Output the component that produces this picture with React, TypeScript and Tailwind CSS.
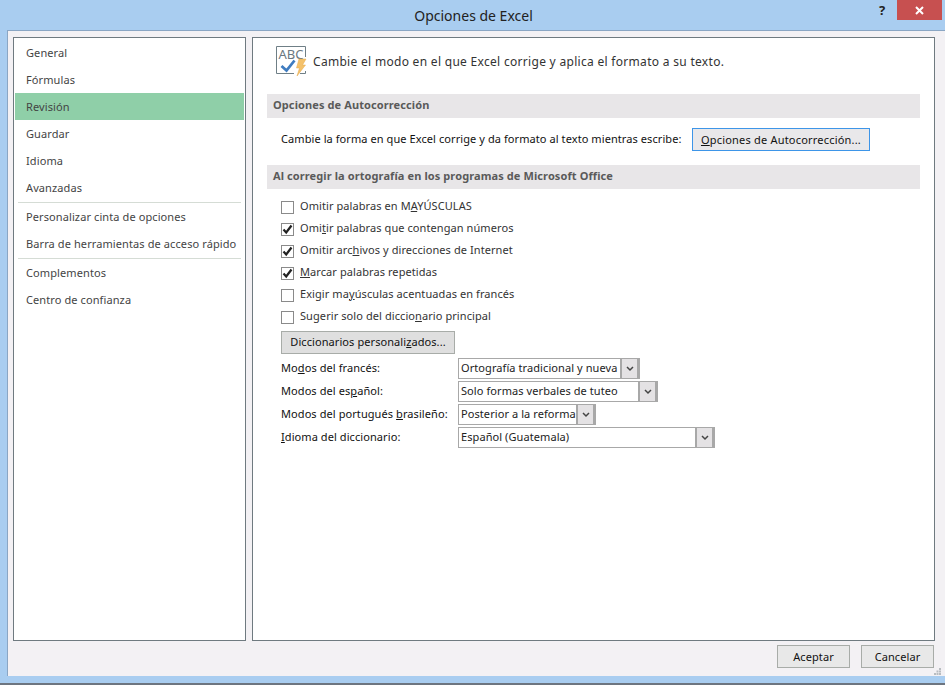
import React from "react";

const font = "font-['Noto_Sans',sans-serif]";

const NavItem = ({ text, active }: { text: string; active?: boolean }) => (
  <div
    className={`h-[27px] whitespace-nowrap pl-[11px] text-[11px] leading-[27px] tracking-[0.1px] text-[#444444] ${
      active ? "bg-[#8fcfa8]" : ""
    }`}
  >
    {text}
  </div>
);

const NavLine = () => <div className="mx-[3px] h-px bg-[#d5dcd5]" />;

const Section = ({ children }: { children: React.ReactNode }) => (
  <div className="flex h-[24px] items-center whitespace-nowrap bg-[#e8e6e8] pb-[2px] pl-[6px] text-[11px] font-bold tracking-[0.1px] text-[#5a5a5a]">
    {children}
  </div>
);

const Check = ({ checked, children }: { checked?: boolean; children: React.ReactNode }) => (
  <div className="flex h-[22px] items-center">
    <div className="flex h-[13px] w-[13px] items-center justify-center border border-[#8a8a8a] bg-white">
      {checked && (
        <svg width="11" height="11" viewBox="0 0 11 11">
          <path d="M1.5 5.5 L4.2 8.5 L9.5 1.5" fill="none" stroke="#222222" strokeWidth="2.2" />
        </svg>
      )}
    </div>
    <span className="ml-[6px] whitespace-nowrap pb-[2px] text-[11px] tracking-[0.08px] text-[#333333]">{children}</span>
  </div>
);

const Select = ({ label, value, width }: { label: React.ReactNode; value: string; width: string }) => (
  <div className="flex h-[23px] items-center">
    <div className="w-[177px] whitespace-nowrap text-[11px] tracking-[0.08px] text-[#111111]">{label}</div>
    <div className={`flex h-[21px] items-center border border-[#a8a8a8] bg-white ${width}`}>
      <div className="flex-1 overflow-hidden whitespace-nowrap pl-[2px] text-[11px] tracking-[0.08px] text-[#222222]">{value}</div>
      <div className="flex h-full w-[19px] shrink-0 items-center justify-center border-x-2 border-[#a8a8a8] bg-[#e4e2e4]">
        <svg width="8" height="6" viewBox="0 0 8 6">
          <path d="M1 1 L4 4 L7 1" fill="none" stroke="#444444" strokeWidth="1.5" />
        </svg>
      </div>
    </div>
  </div>
);

const Btn = ({ children, className }: { children: React.ReactNode; className: string }) => (
  <div className={`flex h-[23px] items-center justify-center whitespace-nowrap border text-[11px] tracking-[0.08px] text-[#111111] ${className}`}>
    {children}
  </div>
);

const AbcIcon = () => (
  <svg width="31" height="31" viewBox="0 0 31 31" className="shrink-0">
    <path d="M0.5 27.5 V0.5 H29.5 V11 M0.5 27.5 H18 M24 27.5 H29.5 V25" fill="none" stroke="#6f7f86" strokeWidth="1" />
    <text x="2.5" y="12.5" fontSize="13" fontFamily="Noto Sans, sans-serif" fill="#6b7780">ABC</text>
    <path d="M5.5 20 L10.5 24.5 L18.5 14.5" fill="none" stroke="#3f7cc0" strokeWidth="2.8" />
    <path d="M23 13 H30 L26.5 19 H29.5 L21 30 L23.5 22 H20.5 Z" fill="#f4c16a" stroke="#e5a94a" strokeWidth="0.5" />
  </svg>
);

export default function App() {
  return (
    <div className={`flex h-[685px] w-[945px] flex-col overflow-hidden bg-[#a9cdf0] ${font}`}>
      {/* barra de titulo */}
      <div className="relative flex h-[30px] shrink-0 items-center justify-center">
        <span className="pl-[2px] text-[14px] text-[#222222]">Opciones de Excel</span>
        <span className="absolute left-[879px] top-[1px] text-[13px] font-bold text-[#222222]">?</span>
        <div className="absolute left-[897px] top-0 flex h-[20px] w-[45px] items-center justify-center bg-[#c75050]">
          <svg width="9" height="9" viewBox="0 0 9 9">
            <path d="M1 1 L8 8 M8 1 L1 8" stroke="#ffffff" strokeWidth="2" />
          </svg>
        </div>
      </div>

      <div className="ml-[7px] flex h-[646px] shrink-0 flex-col border-l border-t border-[#8aa6c4] bg-[#f3f1f4]">
        <div className="flex h-[610px] shrink-0 gap-[6px] pl-[5px] pt-[6px]">
          {/* menu lateral */}
          <div className="h-[604px] w-[233px] shrink-0 border border-[#6f7a80] bg-white px-px pt-px">
            <NavItem text="General" />
            <NavItem text="Fórmulas" />
            <NavItem text="Revisión" active />
            <NavItem text="Guardar" />
            <NavItem text="Idioma" />
            <NavItem text="Avanzadas" />
            <div className="h-px" />
            <NavLine />
            <NavItem text="Personalizar cinta de opciones" />
            <NavItem text="Barra de herramientas de acceso rápido" />
            <div className="h-px" />
            <NavLine />
            <NavItem text="Complementos" />
            <NavItem text="Centro de confianza" />
          </div>

          {/* contenido */}
          <div className="h-[604px] w-[683px] shrink-0 border border-[#6f7a80] bg-white px-[14px]">
            <div className="flex h-[56px] items-start pl-[9px] pt-[8px]">
              <AbcIcon />
              <span className="ml-[6px] whitespace-nowrap pt-[7px] text-[12px] tracking-[0.3px] text-[#333333]">
                Cambie el modo en el que Excel corrige y aplica el formato a su texto.
              </span>
            </div>
            <Section>Opciones de Autocorrección</Section>
            <div className="flex h-[47px] items-center pb-[4px] pl-[14px]">
              <span className="w-[411px] whitespace-nowrap text-[11px] tracking-[0.08px] text-[#111111]">
                Cambie la forma en que Excel corrige y da formato al texto mientras escribe:
              </span>
              <Btn className="w-[178px] border-[#3d95e8] bg-[#e9e8ea] pt-[2px]">
                <span className="tracking-[0.2px]">
                  <u>O</u>pciones de Autocorrección...
                </span>
              </Btn>
            </div>
            <Section>Al corregir la ortografía en los programas de Microsoft Office</Section>
            <div className="pl-[14px] pt-[7px]">
              <Check>Omitir palabras en M<u>A</u>YÚSCULAS</Check>
              <Check checked>Omi<u>t</u>ir palabras que contengan números</Check>
              <Check checked>Omitir arc<u>h</u>ivos y direcciones de Internet</Check>
              <Check checked><u>M</u>arcar palabras repetidas</Check>
              <Check>Exigir ma<u>y</u>úsculas acentuadas en francés</Check>
              <Check>Sugerir solo del diccio<u>n</u>ario principal</Check>
              <Btn className="mt-[3px] w-[174px] border-[#a8aca8] bg-[#dfdfdf]">
                <span>Diccionarios personali<u>z</u>ados...</span>
              </Btn>
              <div className="pt-[3px]">
                <Select label={<>Mo<u>d</u>os del francés:</>} value="Ortografía tradicional y nueva" width="w-[182px]" />
                <Select label={<>Modos del es<u>p</u>añol:</>} value="Solo formas verbales de tuteo" width="w-[200px]" />
                <Select label={<>Modos del portugués <u>b</u>rasileño:</>} value="Posterior a la reforma" width="w-[138px]" />
                <Select label={<><u>I</u>dioma del diccionario:</>} value="Español (Guatemala)" width="w-[257px]" />
              </div>
            </div>
          </div>
        </div>

        {/* botones */}
        <div className="relative flex flex-1 items-start justify-end gap-[11px] pr-[11px] pt-[4px]">
          <Btn className="w-[73px] border-[#a8aca8] bg-[#e8e8e8] pt-[2px]">Aceptar</Btn>
          <Btn className="w-[73px] border-[#a8aca8] bg-[#e8e8e8] pt-[2px]">Cancelar</Btn>
          <svg width="8" height="8" viewBox="0 0 8 8" className="absolute bottom-[1px] right-[3px]">
            <path d="M5 1 h2 v2 h-2 z M2.5 3.5 h2 v2 h-2 z M5 3.5 h2 v2 h-2 z M0 6 h2 v2 h-2 z M2.5 6 h2 v2 h-2 z M5 6 h2 v2 h-2 z" fill="#b8bcc0" />
          </svg>
        </div>
      </div>
      <div className="flex-1 bg-[#a9cdf0]" />
      <div className="h-[2px] shrink-0 bg-[#6d7580]" />
    </div>
  );
}
